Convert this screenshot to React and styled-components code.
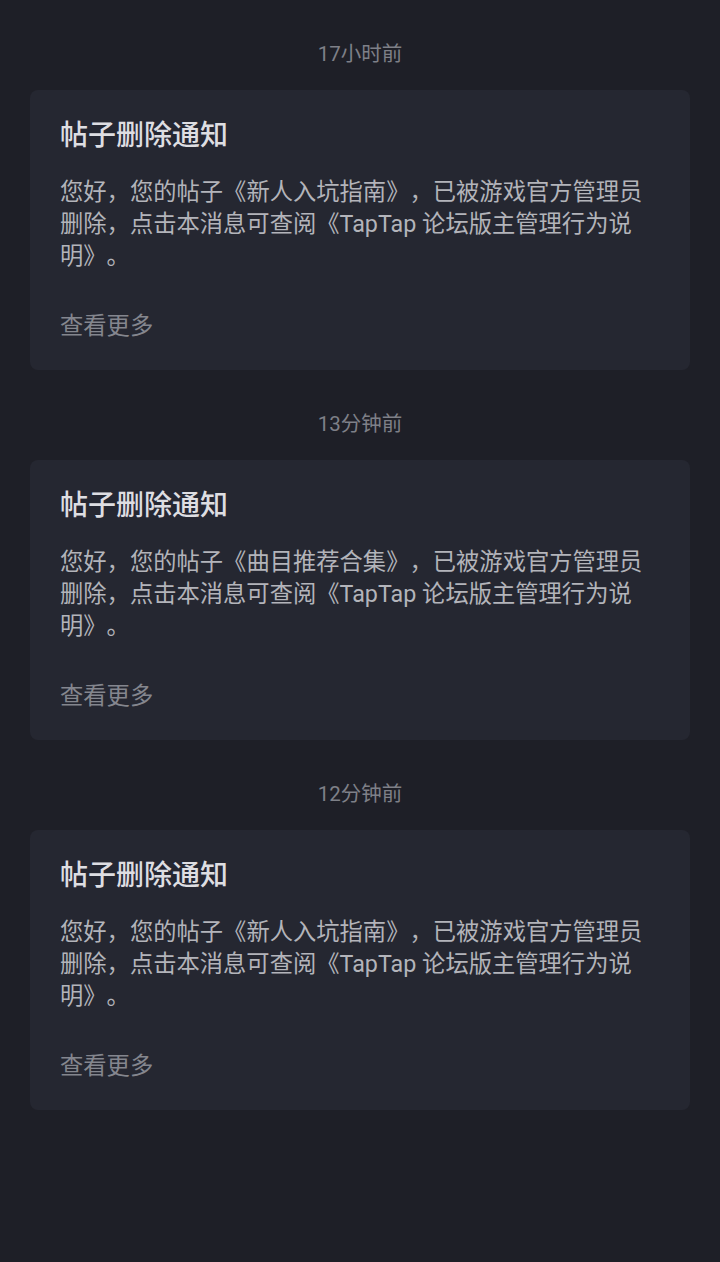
import React from "react";
import styled, { createGlobalStyle } from "styled-components";

const GlobalStyle = createGlobalStyle`
  html, body {
    margin: 0;
    padding: 0;
    background: #1e1f27;
  }
  body {
    font-family: Roboto, "Noto Sans CJK SC", sans-serif;
    text-spacing-trim: space-all;
    -webkit-font-smoothing: antialiased;
  }
`;

const Page = styled.div`
  min-height: 1262px;
  background: #1e1f27;
  padding: 40px 30px;
  box-sizing: border-box;
  display: flex;
  flex-direction: column;
  gap: 40px;
`;

const Group = styled.section`
  display: flex;
  flex-direction: column;
`;

const TimeLabel = styled.div`
  height: 28px;
  line-height: 28px;
  margin-bottom: 22px;
  text-align: center;
  font-size: 20.5px;
  color: #7e8088;
`;

const Card = styled.div`
  height: 280px;
  box-sizing: border-box;
  background: #252731;
  border-radius: 8px;
  padding: 26px 30px 24px;
  display: flex;
  flex-direction: column;
`;

const Title = styled.h3`
  margin: 0;
  font-size: 28px;
  font-weight: 500;
  line-height: 40px;
  color: #dedee2;
`;

const Body = styled.p`
  margin: 20px 0 0;
  font-size: 23.3px;
  line-height: 32px;
  color: #b3b4ba;
`;

const More = styled.div`
  margin-top: 38px;
  font-size: 23.3px;
  line-height: 32px;
  color: #84868e;
`;

const notices = [
  { time: "17小时前", post: "新人入坑指南" },
  { time: "13分钟前", post: "曲目推荐合集" },
  { time: "12分钟前", post: "新人入坑指南" },
];

export default function App() {
  return (
    <>
      <GlobalStyle />
      <Page>
        {notices.map((n, i) => (
          <Group key={i}>
            <TimeLabel>{n.time}</TimeLabel>
            <Card>
              <Title>帖子删除通知</Title>
              <Body>
                您好，您的帖子《{n.post}》，已被游戏官方管理员删除，点击本消息可查阅《TapTap
                论坛版主管理行为说明》。
              </Body>
              <More>查看更多</More>
            </Card>
          </Group>
        ))}
      </Page>
    </>
  );
}
